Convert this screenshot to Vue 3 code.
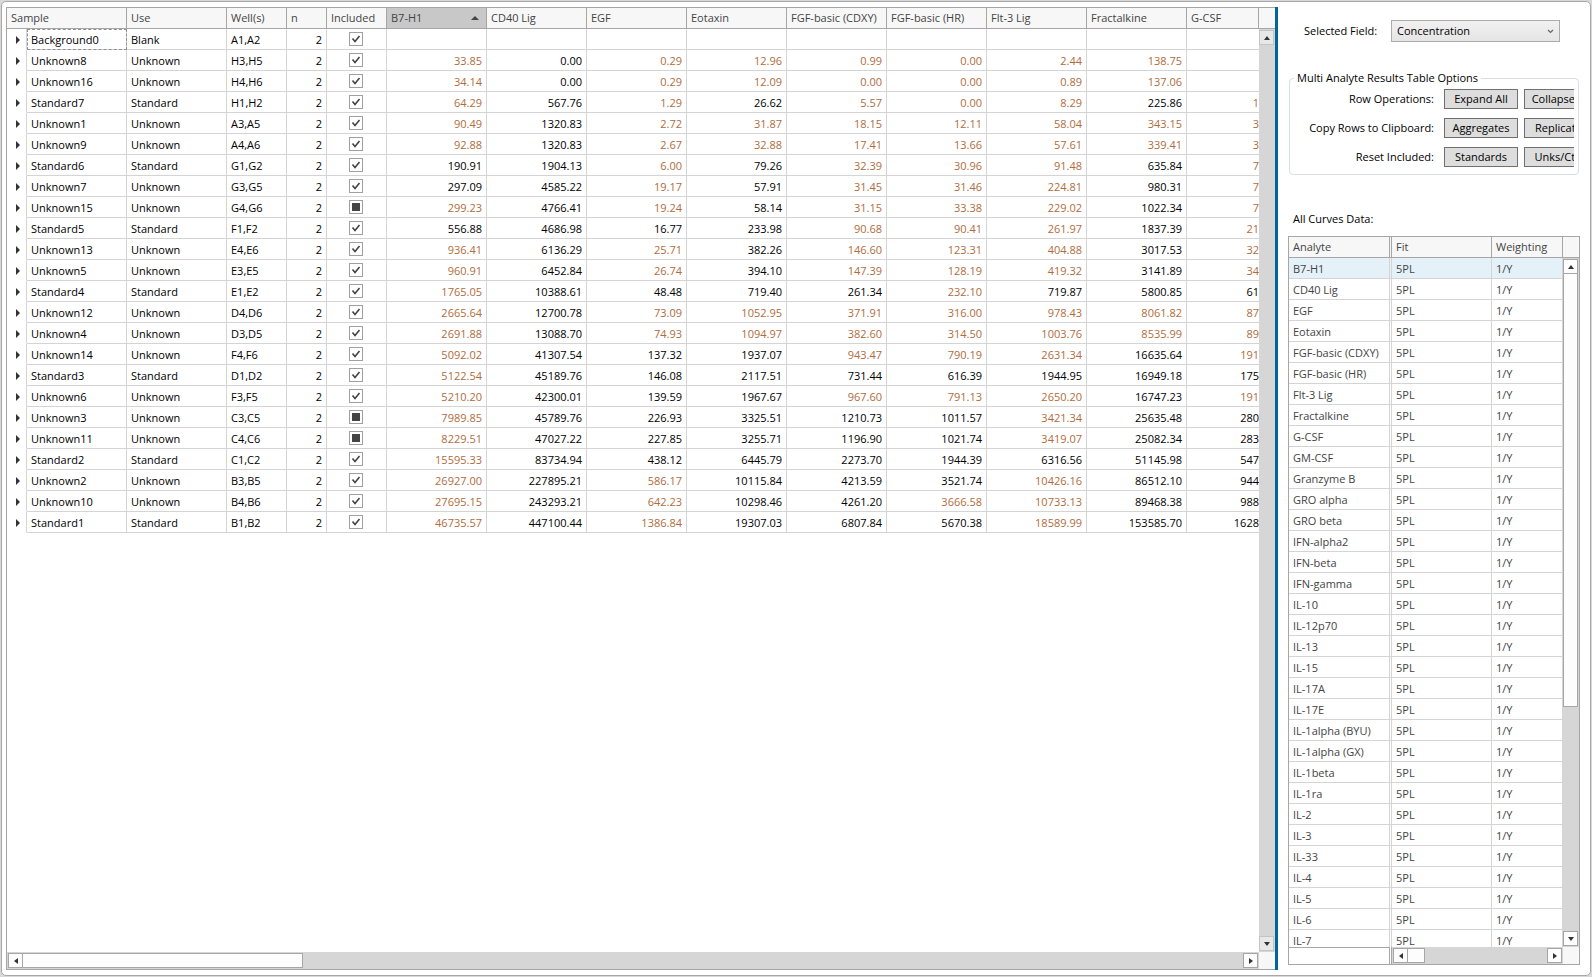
<script setup>
import { ref } from 'vue'

const analyteColumns = ['CD40 Lig', 'EGF', 'Eotaxin', 'FGF-basic (CDXY)', 'FGF-basic (HR)', 'Flt-3 Lig', 'Fractalkine', 'G-CSF']

// A trailing * marks a value that falls outside the accepted recovery range.
// Fields: sample | wells | included state | analyte values
const source = `
Background0|A1,A2|1|
Unknown8|H3,H5|1|33.85* 0.00 0.29* 12.96* 0.99* 0.00* 2.44* 138.75*
Unknown16|H4,H6|1|34.14* 0.00 0.29* 12.09* 0.00* 0.00* 0.89* 137.06*
Standard7|H1,H2|1|64.29* 567.76 1.29* 26.62 5.57* 0.00* 8.29* 225.86 1*
Unknown1|A3,A5|1|90.49* 1320.83 2.72* 31.87* 18.15* 12.11* 58.04* 343.15* 3*
Unknown9|A4,A6|1|92.88* 1320.83 2.67* 32.88* 17.41* 13.66* 57.61* 339.41* 3*
Standard6|G1,G2|1|190.91 1904.13 6.00* 79.26 32.39* 30.96* 91.48* 635.84 7*
Unknown7|G3,G5|1|297.09 4585.22 19.17* 57.91 31.45* 31.46* 224.81* 980.31 7*
Unknown15|G4,G6|0|299.23* 4766.41 19.24* 58.14 31.15* 33.38* 229.02* 1022.34 7*
Standard5|F1,F2|1|556.88 4686.98 16.77 233.98 90.68* 90.41* 261.97* 1837.39 21*
Unknown13|E4,E6|1|936.41* 6136.29 25.71* 382.26 146.60* 123.31* 404.88* 3017.53 32*
Unknown5|E3,E5|1|960.91* 6452.84 26.74* 394.10 147.39* 128.19* 419.32* 3141.89 34*
Standard4|E1,E2|1|1765.05* 10388.61 48.48 719.40 261.34 232.10* 719.87 5800.85 61
Unknown12|D4,D6|1|2665.64* 12700.78 73.09* 1052.95* 371.91* 316.00* 978.43* 8061.82* 87*
Unknown4|D3,D5|1|2691.88* 13088.70 74.93* 1094.97* 382.60* 314.50* 1003.76* 8535.99* 89*
Unknown14|F4,F6|1|5092.02* 41307.54 137.32 1937.07 943.47* 790.19* 2631.34* 16635.64 191*
Standard3|D1,D2|1|5122.54* 45189.76 146.08 2117.51 731.44 616.39 1944.95 16949.18 175
Unknown6|F3,F5|1|5210.20* 42300.01 139.59 1967.67 967.60* 791.13* 2650.20* 16747.23 191*
Unknown3|C3,C5|0|7989.85* 45789.76 226.93 3325.51 1210.73 1011.57 3421.34* 25635.48 280
Unknown11|C4,C6|0|8229.51* 47027.22 227.85 3255.71 1196.90 1021.74 3419.07* 25082.34 283
Standard2|C1,C2|1|15595.33* 83734.94 438.12 6445.79 2273.70 1944.39 6316.56 51145.98 547
Unknown2|B3,B5|1|26927.00* 227895.21 586.17* 10115.84 4213.59 3521.74 10426.16* 86512.10 944
Unknown10|B4,B6|1|27695.15* 243293.21 642.23* 10298.46 4261.20 3666.58* 10733.13* 89468.38 988
Standard1|B1,B2|1|46735.57* 447100.44 1386.84* 19307.03 6807.84 5670.38 18589.99* 153585.70 1628
`

const rows = source.trim().split('\n').map((line) => {
  const [sample, wells, included, list] = line.split('|')
  const parts = list ? list.split(' ') : []
  return {
    sample,
    wells,
    use: sample.startsWith('Background') ? 'Blank' : sample.replace(/\d+$/, ''),
    included: included === '1',
    values: Array.from({ length: 9 }, (_, i) => ({
      text: (parts[i] || '').replace('*', ''),
      flagged: (parts[i] || '').endsWith('*')
    }))
  }
})

const curves = [
  'B7-H1', 'CD40 Lig', 'EGF', 'Eotaxin', 'FGF-basic (CDXY)', 'FGF-basic (HR)', 'Flt-3 Lig', 'Fractalkine',
  'G-CSF', 'GM-CSF', 'Granzyme B', 'GRO alpha', 'GRO beta', 'IFN-alpha2', 'IFN-beta', 'IFN-gamma', 'IL-10',
  'IL-12p70', 'IL-13', 'IL-15', 'IL-17A', 'IL-17E', 'IL-1alpha (BYU)', 'IL-1alpha (GX)', 'IL-1beta', 'IL-1ra',
  'IL-2', 'IL-3', 'IL-33', 'IL-4', 'IL-5', 'IL-6', 'IL-7'
]

const operations = [
  { label: 'Row Operations:', buttons: ['Expand All', 'Collapse All'] },
  { label: 'Copy Rows to Clipboard:', buttons: ['Aggregates', 'Replicates'] },
  { label: 'Reset Included:', buttons: ['Standards', 'Unks/Ctrls'] }
]

const field = ref('Concentration')
const selected = ref('B7-H1')
</script>

<template>
  <div class="window">
    <main class="panel">
      <section class="results">
        <div class="results-head">
          <table class="grid">
            <colgroup>
              <col class="w-sample"><col class="w-100"><col class="w-60"><col class="w-40"><col class="w-60">
              <col v-for="n in 8" :key="n" class="w-100"><col>
            </colgroup>
            <thead>
              <tr>
                <th>Sample</th><th>Use</th><th>Well(s)</th><th>n</th><th>Included</th>
                <th class="sorted">
                  <span class="sort-head">B7-H1
                    <svg width="8" height="4" viewBox="0 0 8 4" aria-hidden="true"><path d="M0 4L4 0L8 4Z" fill="#444" /></svg>
                  </span>
                </th>
                <th v-for="name in analyteColumns" :key="name">{{ name }}</th>
              </tr>
            </thead>
          </table>
          <div class="corner head-corner"></div>
        </div>

        <div class="results-body">
          <table class="grid data">
            <colgroup>
              <col class="w-expander"><col class="w-100"><col class="w-100"><col class="w-60"><col class="w-40"><col class="w-60">
              <col v-for="n in 8" :key="n" class="w-100"><col>
            </colgroup>
            <tbody>
              <tr v-for="(row, i) in rows" :key="row.sample">
                <td class="expander">
                  <button type="button" :aria-label="'Expand ' + row.sample">
                    <svg width="4" height="8" viewBox="0 0 4 8"><path d="M0 0L4 4L0 8Z" fill="#333" /></svg>
                  </button>
                </td>
                <td :class="{ focused: i === 0 }">{{ row.sample }}</td>
                <td>{{ row.use }}</td>
                <td>{{ row.wells }}</td>
                <td class="num">2</td>
                <td class="tick">
                  <label>
                    <input type="checkbox" :checked="row.included" :indeterminate="!row.included" :aria-label="'Include ' + row.sample">
                    <svg width="14" height="14" viewBox="0 0 14 14" aria-hidden="true">
                      <path v-if="row.included" d="M3.5 6.5L6 9.5L10.5 4" fill="none" stroke="#444" stroke-width="1.6" />
                      <rect v-else x="3" y="3" width="8" height="8" fill="#444" />
                    </svg>
                  </label>
                </td>
                <td v-for="(value, c) in row.values" :key="c" class="num" :class="{ flagged: value.flagged }">{{ value.text }}</td>
              </tr>
            </tbody>
          </table>
          <div class="vbar">
            <button type="button" class="arrow idle" aria-label="Scroll up"><svg width="6" height="4" viewBox="0 0 6 4"><path d="M0 4L3 0L6 4Z" fill="#333" /></svg></button>
            <span class="track"></span>
            <button type="button" class="arrow idle" aria-label="Scroll down"><svg width="6" height="4" viewBox="0 0 6 4"><path d="M0 0L3 4L6 0Z" fill="#333" /></svg></button>
          </div>
        </div>

        <div class="results-foot">
          <div class="hbar">
            <button type="button" class="arrow" aria-label="Scroll left"><svg width="4" height="6" viewBox="0 0 4 6"><path d="M4 0L0 3L4 6Z" fill="#333" /></svg></button>
            <span class="thumb results-thumb"></span>
            <span class="track"></span>
            <button type="button" class="arrow" aria-label="Scroll right"><svg width="4" height="6" viewBox="0 0 4 6"><path d="M0 0L4 3L0 6Z" fill="#333" /></svg></button>
          </div>
          <div class="corner"></div>
        </div>
      </section>

      <div class="splitter"></div>

      <aside class="side">
        <div class="field-row">
          <label for="field">Selected Field:</label>
          <span class="select-box">
            <select id="field" v-model="field"><option>Concentration</option></select>
            <svg width="7" height="5" viewBox="0 0 7 5" aria-hidden="true"><path d="M1 1L3.5 3.5L6 1" fill="none" stroke="#666" stroke-width="1.2" /></svg>
          </span>
        </div>

        <fieldset class="options">
          <legend>Multi Analyte Results Table Options</legend>
          <div v-for="op in operations" :key="op.label" class="op-row">
            <span class="op-label">{{ op.label }}</span>
            <button v-for="name in op.buttons" :key="name" type="button" class="push">{{ name }}</button>
          </div>
        </fieldset>

        <h2>All Curves Data:</h2>

        <section class="curves">
          <div class="curves-head">
            <table class="grid">
              <colgroup><col class="w-frozen"><col class="w-gap"><col class="w-100"><col></colgroup>
              <thead>
                <tr><th>Analyte</th><th class="gap"></th><th>Fit</th><th>Weighting</th></tr>
              </thead>
            </table>
            <div class="corner head-corner"></div>
          </div>
          <div class="curves-body">
            <div class="clip">
              <table class="grid">
                <colgroup><col class="w-frozen"><col class="w-gap"><col class="w-100"><col></colgroup>
                <tbody>
                  <tr v-for="name in curves" :key="name" :class="{ selected: name === selected }" @click="selected = name">
                    <td>{{ name }}</td><td class="gap"></td><td>5PL</td><td>1/Y</td>
                  </tr>
                </tbody>
              </table>
            </div>
            <div class="vbar">
              <button type="button" class="arrow" aria-label="Scroll curves up"><svg width="6" height="4" viewBox="0 0 6 4"><path d="M0 4L3 0L6 4Z" fill="#333" /></svg></button>
              <span class="thumb curves-vthumb"></span>
              <span class="track"></span>
              <button type="button" class="arrow" aria-label="Scroll curves down"><svg width="6" height="4" viewBox="0 0 6 4"><path d="M0 0L3 4L6 0Z" fill="#333" /></svg></button>
            </div>
          </div>
          <div class="curves-foot">
            <div class="frozen"></div>
            <div class="hbar">
              <button type="button" class="arrow" aria-label="Scroll curves left"><svg width="4" height="6" viewBox="0 0 4 6"><path d="M4 0L0 3L4 6Z" fill="#333" /></svg></button>
              <span class="thumb curves-hthumb"></span>
              <span class="track"></span>
              <button type="button" class="arrow" aria-label="Scroll curves right"><svg width="4" height="6" viewBox="0 0 4 6"><path d="M0 0L4 3L0 6Z" fill="#333" /></svg></button>
            </div>
            <div class="corner"></div>
          </div>
        </section>
      </aside>
    </main>
  </div>
</template>

<style>
body {
  background: #d8d8d8;
}
</style>

<style scoped>
* {
  box-sizing: border-box;
}

.window {
  height: 100vh;
  padding: 1px;
  background: #d8d8d8;
  color: #000;
  font-family: "Open Sans", "Noto Sans", sans-serif;
  font-size: 11px;
  line-height: 20px;
}

.panel {
  display: grid;
  grid-template-columns: minmax(0, 1fr) 3px 312px;
  height: 100%;
  padding: 5px 0 5px 4px;
  border: 1px solid #a8a8a8;
  border-radius: 5px;
  background: #fff;
}

button,
select {
  color: inherit;
  font: inherit;
}

/* Results grid */
.results {
  display: flex;
  flex-direction: column;
  min-width: 0;
  min-height: 0;
  border: 1px solid #a6a6a6;
  border-right: 0;
}

.results-head,
.curves-head {
  display: flex;
}

.results-body {
  display: flex;
  flex: 1;
  align-items: flex-start;
  min-height: 0;
  overflow: hidden;
}

.results-foot {
  display: flex;
}

.grid {
  flex: 1;
  width: 0;
  border-spacing: 0;
  table-layout: fixed;
}

.w-sample { width: 120px; }
.w-expander { width: 20px; }
.w-frozen { width: 101px; }
.w-100 { width: 100px; }
.w-60 { width: 60px; }
.w-40 { width: 40px; }
.w-gap { width: 2px; }

th,
td {
  height: 21px;
  padding: 0 4px;
  overflow: hidden;
  border-right: 1px solid #d4d4d4;
  border-bottom: 1px solid #d4d4d4;
  font-weight: 400;
  text-align: left;
  white-space: nowrap;
}

td {
  padding-top: 2px;
  line-height: 18px;
}

th {
  background: #f7f7f7;
  border-color: #a6a6a6;
  color: #444;
}

.sorted {
  background: #c8c8c8;
}

.sort-head {
  display: flex;
  align-items: center;
  justify-content: space-between;
  padding-right: 3px;
}

.data td:last-child {
  padding-right: 0;
  border-right: 0;
}

.num {
  text-align: right;
}

.flagged {
  color: #b06c3c;
}

.expander {
  padding: 0;
  border-bottom-color: transparent;
}

.expander button {
  display: flex;
  align-items: center;
  justify-content: center;
  width: 100%;
  height: 20px;
  padding: 2px 0 0 3px;
  border: 0;
  background: none;
}

.focused {
  outline: 1px dashed #909090;
  outline-offset: -1px;
}

.tick {
  padding: 0;
}

.tick label {
  display: grid;
  justify-content: center;
  align-content: center;
  height: 20px;
  padding: 0 2px 1px 0;
}

.tick input,
.tick svg {
  grid-area: 1 / 1;
}

.tick input {
  width: 14px;
  height: 14px;
  margin: 0;
  appearance: none;
  border: 1px solid #a0a0a0;
  background: #fff;
}

.tick svg {
  pointer-events: none;
}

/* Scroll bars */
.corner {
  width: 16px;
  height: 17px;
  background: #f7f7f7;
}

.head-corner {
  height: 21px;
  border-bottom: 1px solid #a6a6a6;
}

.vbar {
  display: flex;
  flex-direction: column;
  align-self: stretch;
  width: 16px;
  padding: 1px 1px 1px 0;
  background: #d6d6d6;
}

.hbar {
  display: flex;
  flex: 1;
  min-width: 0;
  height: 17px;
  padding: 1px;
  background: #d6d6d6;
}

.arrow {
  display: flex;
  flex: none;
  align-items: center;
  justify-content: center;
  width: 15px;
  height: 15px;
  padding: 0;
  border: 1px solid #a6a6a6;
  background: #fdfdfd;
}

.idle {
  border-color: #c4c4c4;
  background: #e8e8e8;
}

.track {
  flex: 1;
}

.thumb {
  border: 1px solid #a6a6a6;
  background: #fdfdfd;
}

.results-thumb {
  width: 280px;
  border-left: 0;
}

.curves-vthumb {
  width: 15px;
  height: 63%;
  border-top: 0;
}

.curves-hthumb {
  width: 17px;
  border-left: 0;
}

.splitter {
  background: #006699;
}

/* Side panel */
.side {
  display: flex;
  flex-direction: column;
  min-height: 0;
  padding: 13px 10px 5px;
}

.field-row {
  display: flex;
  align-items: center;
  gap: 10px;
  padding: 0 20px 0 16px;
}

.field-row label {
  width: 77px;
  white-space: nowrap;
}

.select-box {
  display: grid;
  flex: 1;
  align-items: center;
}

.select-box select,
.select-box svg {
  grid-area: 1 / 1;
}

.select-box select {
  width: 100%;
  height: 22px;
  padding: 0 20px 0 5px;
  appearance: none;
  border: 1px solid #acacac;
  border-radius: 0;
  background: linear-gradient(#f1f1f1, #e5e5e5);
}

.select-box svg {
  justify-self: end;
  margin-right: 6px;
  pointer-events: none;
}

.options {
  min-width: 0;
  margin: 26px 1px 0;
  padding: 1px 4px 7px 0;
  border: 1px solid #d5dfe5;
  border-radius: 4px;
}

.options legend {
  margin-left: 4px;
  padding: 0 3px;
}

.op-row {
  display: flex;
  align-items: center;
  gap: 6px;
  overflow: hidden;
}

.op-row + .op-row {
  margin-top: 9px;
}

.op-label {
  flex: none;
  width: 148px;
  padding-right: 4px;
  text-align: right;
}

.push {
  flex: none;
  width: 74px;
  height: 20px;
  padding: 0;
  border: 1px solid #707070;
  background: #ddd;
  line-height: 18px;
}

h2 {
  margin: 34px 0 7px 5px;
  font-size: 11px;
  font-weight: 400;
}

.curves {
  display: flex;
  flex: 1;
  flex-direction: column;
  min-height: 0;
  border: 1px solid #a6a6a6;
  color: #444;
}

.curves-body {
  display: flex;
  flex: 1;
  min-height: 0;
}

.clip {
  display: flex;
  flex: 1;
  align-items: flex-start;
  min-height: 0;
  overflow: hidden;
}

.gap {
  padding: 0;
}

.selected {
  background: #e5f1f9;
}

.curves-foot {
  display: flex;
}

.frozen {
  width: 101px;
  margin-right: 1px;
  border-top: 1px solid #a6a6a6;
  border-right: 1px solid #a6a6a6;
}

.curves-foot .hbar {
  border-left: 1px solid #a6a6a6;
}
</style>
